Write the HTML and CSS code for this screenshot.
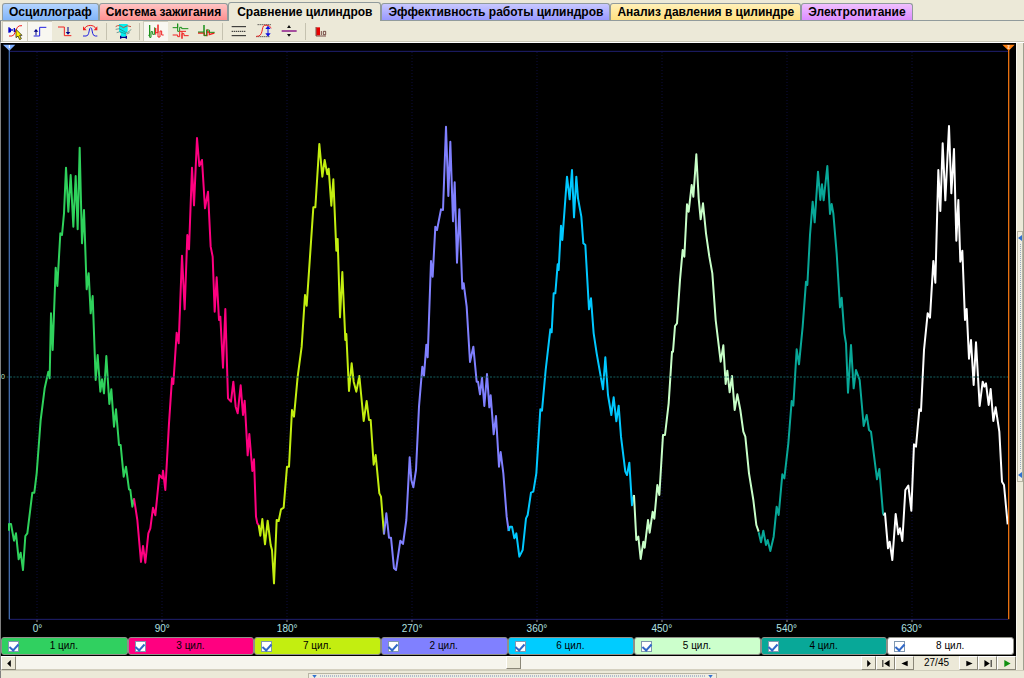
FILE: index.html
```html
<!DOCTYPE html>
<html lang="ru">
<head>
<meta charset="utf-8">
<title>Сравнение цилиндров</title>
<link rel="stylesheet" href="styles.css">
</head>
<body>
<div class="tabs" role="tablist">
  <button class="tab tab-blue" role="tab">Осциллограф</button>
  <button class="tab tab-red" role="tab">Система зажигания</button>
  <button class="tab tab-active" role="tab" aria-selected="true">Сравнение цилиндров</button>
  <button class="tab tab-violet" role="tab">Эффективность работы цилиндров</button>
  <button class="tab tab-yellow" role="tab">Анализ давления в цилиндре</button>
  <button class="tab tab-pink" role="tab">Электропитание</button>
</div>
<div class="toolbar" role="toolbar">
  <button class="tool pressed" aria-label="Выбор"><svg class="icon" viewBox="12 66 60 54"><path d="M24 82v16M28 85v12M33 87v6M40 84v12" stroke="#00c" stroke-width="4"/><path d="M24 108q10 2 15-4l10-22q4-6 14-5" stroke="#f02020" stroke-width="3"/><path d="M45 88v25l6-5 5 11 5-3-5-10h7z" fill="#fff000" stroke="#000" stroke-width="2"/></svg></button>
  <button class="tool pressed" aria-label="Фронт"><svg class="icon" viewBox="90 66 60 54"><path d="M101 108h18V82h20" stroke="#2020e0" stroke-width="3"/><path d="M108 106V90" stroke="#008" stroke-width="3"/><path d="M101 95l7-8 7 8z" fill="#008"/></svg></button>
  <button class="tool" aria-label="Спад"><svg class="icon" viewBox="165 66 60 54"><path d="M174 81h19v26h21" stroke="#f02020" stroke-width="3"/><path d="M204 81v17" stroke="#008" stroke-width="3"/><path d="M197 96l7 8 7-8z" fill="#008"/></svg></button>
  <button class="tool" aria-label="Цикл"><svg class="icon" viewBox="240 66 60 54"><path d="M249 108h9q6 0 8-8l3-14q3-6 6 0l3 14q2 8 8 8h6" stroke="#2020e0" stroke-width="3"/><path d="M254 86c5-13 28-13 34 0" stroke="#f02020" stroke-width="3"/><path d="M249 79v12h11zM292 79v12h-11z" fill="#f02020"/></svg></button>
  <span class="sep"></span>
  <button class="tool" aria-label="Датчик"><svg class="icon" viewBox="337 66 60 54"><path d="M355 72h26v22l-5 5v11h-16V99l-5-5z" fill="#00f0f0"/><path d="M345 88q10-6 23 5t23-5M348 98q9-6 20 1t19-1" stroke="#307070" stroke-width="2"/><path d="M345 80q10-8 23 3q12-10 23-3" stroke="#c05040" stroke-width="3"/><path d="M360 107v9M377 107v9M360 112h17" stroke="#008" stroke-width="4"/></svg></button>
  <span class="sep"></span>
  <button class="tool pressed" aria-label="Рядом"><svg class="icon" viewBox="435 66 60 54"><path d="M442 106h4V75v37h4V95h5v8h6V82" stroke="#189018" stroke-width="3"/><path d="M464 104V84v14h7V74v37h6V93h5v12h6" stroke="#f02020" stroke-width="3"/></svg></button>
  <button class="tool" aria-label="Друг под другом"><svg class="icon" viewBox="510 66 60 54"><path d="M515 83h15V71v23h6V82h6v4h20" stroke="#189018" stroke-width="3"/><path d="M515 105h15v5h6V94h7v22-15h6v6h14M543 94h12" stroke="#f02020" stroke-width="3"/></svg></button>
  <button class="tool" aria-label="Наложение"><svg class="icon" viewBox="585 66 60 54"><path d="M591 99h19v7h8V88v21-13h7v8l15-5" stroke="#f02020" stroke-width="4"/><path d="M591 96h18V75v32h8V90h8v7h16" stroke="#189018" stroke-width="3"/></svg></button>
  <span class="sep"></span>
  <button class="tool" aria-label="Линии"><svg class="icon" viewBox="684 66 60 54"><path d="M692 80h43M692 107h43" stroke="#222" stroke-width="3"/><path d="M692 94h43" stroke="#222" stroke-width="3" stroke-dasharray="4 2"/></svg></button>
  <button class="tool" aria-label="Размах"><svg class="icon" viewBox="759 66 60 54"><path d="M770 74h42M766 110h42" stroke="#222" stroke-width="3" stroke-dasharray="3 3"/><path d="M766 109c23 2 14-32 25-33s12 0 20 8" stroke="#f02020" stroke-width="3"/><path d="M801 82v23" stroke="#1010e0" stroke-width="3"/><path d="M793 87l8-10 8 10zM793 100l8 10 8-10z" fill="#1010e0"/></svg></button>
  <button class="tool" aria-label="Сжать"><svg class="icon" viewBox="835 66 60 54"><path d="M843 93h45" stroke="#800080" stroke-width="4"/><path d="M859 84l6-9 6 9zM859 102l6 8 6-8z" fill="#111"/></svg></button>
  <span class="sep"></span>
  <button class="tool" aria-label="Десять"><svg class="icon" viewBox="933 66 60 54"><path d="M946 82h11v24h-11z" fill="#e80000"/><path d="M945 81v27h30M961 93v12M967 94h7v10h-7z" stroke="#400000" stroke-width="2"/></svg></button>
</div>
<main class="work">
  <section class="scope">
    <svg class="plot" viewBox="3 129 3045 1737" preserveAspectRatio="none" role="img" aria-label="Сигналы цилиндров">
      <path class="grid" d="M111 156V1856M486 156V1856M861 156V1856M1236 156V1856M1611 156V1856M1986 156V1856M2361 156V1856M2736 156V1856"/>
      <path class="tick" d="M111 1858v8M486 1858v8M861 1858v8M1236 1858v8M1611 1858v8M1986 1858v8M2361 1858v8M2736 1858v8"/>
      <path class="frame" d="M28 154H3024M28 1858H3024"/>
      <path class="cursor-a" d="M28 147V1858"/>
      <path d="M9 134h37l-18 18z" fill="#80b0ff"/><path d="M28 135v9" stroke="#fff" stroke-width="3"/>
      <g transform="translate(0 360)">
        <polyline class="wave" stroke="#2fd25c" points="27,1232 27,1212 33,1212 42,1262 48,1240 56,1318 62,1298 69,1350 76,1248 82,1240 97,1118 103,1118 110,1060 122,900 134,805 145,755 149,775 153,580 158,690 167,443 172,498 181,340 186,345 192,280 198,143 205,275 212,165 220,320 227,168 233,328 239,83 246,370 252,270 260,508 266,460 272,580 278,528 287,780 293,705 301,815 306,778 312,820 319,708 328,852 334,808 342,920 348,868 357,975 362,975 371,1070 378,1040 387,1108 391,1110 397,1160 402,1135"/>
        <polyline class="wave" stroke="#ff0080" points="402,1135 412,1200 423,1326 429,1278 436,1328 445,1240 451,1225 459,1163 466,1186 478,1065 487,1075 489,1052 496,1110 507,910 516,775 520,792 530,638 536,670 546,407 554,568 562,345 567,388 576,143 582,256 591,54 598,138 606,120 615,265 624,215 632,380 638,410 644,575 650,472 657,600 661,590 669,743 676,567 684,835 693,845 700,785 707,860 713,880 722,796 729,885 734,842 743,1006 748,942 757,1053 762,1018 768,1190 772,1210 776,1215"/>
      </g>
      <g transform="translate(750 360)">
        <polyline class="wave" stroke="#c3ee10" points="26,1215 31,1247 37,1197 45,1273 53,1202 62,1275 66,1290 72,1390 80,1200 86,1203 93,1168 101,1163 111,1040 117,1040 126,870 132,890 143,770 155,680 165,525 170,557 180,410 190,262 196,262 208,72 217,170 224,120 232,163 236,146 244,257 250,178 259,392 263,357 270,592 277,456 286,660 289,642 297,813 305,730 311,785 319,815 328,768 341,903 350,843 357,900 362,900 371,1034 377,1005 388,1120 393,1130 402,1243"/>
        <polyline class="wave" stroke="#8080ff" points="402,1243 409,1180 417,1253 423,1253 432,1345 438,1350 451,1262 459,1272 469,1200 479,1012 484,1080 490,1102 498,1050 507,860 517,740 522,767 529,674 533,712 543,423 548,470 556,320 561,330 573,268 579,270 588,20 595,228 601,65 609,304 614,187 621,428 628,268 637,506 641,490 650,560 660,726 670,680 680,785 684,785 690,823 696,773 703,858 711,762 718,862 722,826 731,943 738,888 747,1040 752,996 760,1060 770,1190 776,1233"/>
      </g>
      <g transform="translate(1500 360)">
        <polyline class="wave" stroke="#00c8ff" points="26,1233 30,1220 36,1220 43,1255 49,1240 58,1310 68,1290 78,1195 83,1185 93,1118 100,1115 109,1060 121,868 126,872 137,750 151,628 155,637 161,520 166,520 173,433 176,450 183,317 187,360 201,170 209,238 216,150 222,292 229,170 234,235 244,290 250,370 256,375 267,568 273,535 281,640 290,700 309,808 316,712 324,825 334,885 341,832 349,904 356,857 363,950 376,1055 381,1065 388,1028 396,1156 402,1125"/>
        <polyline class="wave" stroke="#c8ffc8" points="402,1125 409,1260 415,1250 422,1317 430,1265 434,1283 444,1200 449,1238 458,1175 463,1196 472,1095 478,1125 489,945 495,945 506,850 516,695 519,695 525,618 531,610 540,480 548,390 553,410 561,253 566,275 575,195 580,230 589,103 596,235 602,298 609,250 618,340 628,410 637,460 647,600 662,725 670,676 677,792 682,752 689,817 696,768 704,870 712,823 721,870 730,935 736,950 747,1060 760,1140 769,1215 776,1235"/>
      </g>
      <g transform="translate(2250 360)">
        <polyline class="wave" stroke="#08a898" points="26,1237 33,1267 40,1232 48,1275 53,1260 61,1293 71,1250 80,1160 86,1185 97,1063 103,1075 115,970 125,843 130,857 140,688 147,733 158,620 168,485 172,495 180,345 188,245 194,307 204,155 211,240 216,193 221,241 232,138 240,282 245,252 250,280 260,400 270,562 275,533 283,640 288,670 294,818 303,675 311,805 318,750 329,780 341,918 350,885 357,930 363,935 381,1078 388,1047 399,1180 402,1187"/>
        <polyline class="wave" stroke="#ffffff" points="402,1187 405,1180 414,1285 419,1265 427,1320 437,1182 445,1243 450,1225 457,1263 466,1110 475,1097 484,1172 492,973 498,980 508,868 513,873 522,690 533,580 540,593 550,423 556,488 565,150 571,273 578,70 586,241 597,18 604,220 612,87 619,362 625,240 631,425 637,392 645,600 650,567 657,716 663,660 671,795 678,667 689,858 698,785 703,800 708,790 716,855 722,807 730,903 737,862 748,935 756,1085 762,1095 773,1213"/>
      </g>
      <path class="zero" d="M20 1131H3024"/>
      <text class="zero-label" x="3" y="1138">0</text>
      <path class="cursor-b" d="M3026 147V1858"/>
      <path d="M3007 134h37l-18 18z" fill="#ff8010"/><path d="M3022 137h6l-5 8h6" stroke="#fff" stroke-width="2" fill="none"/>
    </svg>
    <div class="axis"><span>0°</span><span>90°</span><span>180°</span><span>270°</span><span>360°</span><span>450°</span><span>540°</span><span>630°</span></div>
    <div class="legend">
      <label class="cyl c1"><input type="checkbox" checked><span>1 цил.</span></label>
      <label class="cyl c3"><input type="checkbox" checked><span>3 цил.</span></label>
      <label class="cyl c7"><input type="checkbox" checked><span>7 цил.</span></label>
      <label class="cyl c2"><input type="checkbox" checked><span>2 цил.</span></label>
      <label class="cyl c6"><input type="checkbox" checked><span>6 цил.</span></label>
      <label class="cyl c5"><input type="checkbox" checked><span>5 цил.</span></label>
      <label class="cyl c4"><input type="checkbox" checked><span>4 цил.</span></label>
      <label class="cyl c8"><input type="checkbox" checked><span>8 цил.</span></label>
    </div>
    <div class="pager">
      <button class="step" aria-label="Влево"><svg viewBox="0 0 10 10"><path d="M7 1v8L3 5z"/></svg></button>
      <input class="scroll" type="range" min="1" max="45" value="27" aria-label="Кадр">
      <button class="step" aria-label="Вправо"><svg viewBox="0 0 10 10"><path d="M3 1v8l4-4z"/></svg></button>
      <button class="nav" aria-label="Первый"><svg viewBox="0 0 10 10"><path d="M1 1h1v8H1zM9 1v8L3 5z"/></svg></button>
      <button class="nav" aria-label="Предыдущий"><svg viewBox="0 0 10 10"><path d="M8 2v6L1 5z"/></svg></button>
      <output class="count">27/45</output>
      <button class="nav" aria-label="Следующий"><svg viewBox="0 0 10 10"><path d="M2 2v6l7-3z"/></svg></button>
      <button class="nav" aria-label="Последний"><svg viewBox="0 0 10 10"><path d="M8 1h1v8H8zM1 1v8l6-4z"/></svg></button>
      <button class="nav play" aria-label="Пуск"><svg viewBox="0 0 10 10"><path d="M2 1v8l7-4z"/></svg></button>
    </div>
  </section>
  <aside class="side">
    <button class="grip grip-v" aria-label="Боковая панель"><svg viewBox="0 0 4 6"><path d="M4 0v6L0 3z"/></svg><i class="dots"></i><svg viewBox="0 0 4 6"><path d="M4 0v6L0 3z"/></svg></button>
  </aside>
</main>
<footer class="foot">
  <button class="grip grip-h" aria-label="Нижняя панель"><svg viewBox="0 0 6 4"><path d="M0 0h6L3 4z"/></svg><i class="dots"></i><svg viewBox="0 0 6 4"><path d="M0 0h6L3 4z"/></svg></button>
</footer>
</body>
</html>
```
FILE: styles.css
```css
* { box-sizing: border-box; }
body {
  margin: 0;
  height: 100vh;
  display: flex;
  flex-direction: column;
  overflow: hidden;
  background: #ece9d8;
  color: #000;
  font: 10px/12px "Liberation Sans", Arial, sans-serif;
}
button { font: inherit; color: inherit; margin: 0; padding: 0; border: 0; background: none; }

.tabs {
  display: flex;
  align-items: flex-end;
  height: 21px;
  padding-left: 2px;
  border-bottom: 1px solid #919b9c;
}
.tab {
  height: 17px;
  padding: 0 6px;
  border: 1px solid #919b9c;
  border-bottom: 0;
  border-radius: 3px 3px 0 0;
  font-size: 12px;
  line-height: 16px;
  font-weight: bold;
  white-space: nowrap;
}
.tab-blue { background: linear-gradient(#b4d4ff, #80b4f8); }
.tab-red { background: linear-gradient(#ffc4c4, #ff9090); }
.tab-active { height: 19px; margin-bottom: -1px; padding: 0 8px; background: #ece9d8; }
.tab-violet { background: linear-gradient(#c8c8ff, #9898ff); }
.tab-yellow { background: linear-gradient(#fff0b8, #ffe080); }
.tab-pink { background: linear-gradient(#f0c0ff, #dc8cff); }

.toolbar {
  display: flex;
  height: 22px;
  padding: 0 1px;
  border-bottom: 1px solid #fff;
  border-left: 1px solid #808080;
  box-shadow: inset 0 -1px #c8c5b4;
}
.tool { width: 25px; height: 20px; display: flex; align-items: center; justify-content: center; }
.pressed { background: #f8f7f1; box-shadow: inset 1px 1px #d0cdbc; }
.icon { width: 20px; height: 18px; fill: none; }
.sep { width: 8px; display: flex; }
.sep::before { content: ""; width: 1px; margin: 2px 0 2px 4px; background: #c5c2b0; }

.work { flex: 1; min-height: 0; display: flex; }
.scope { flex: 1; min-width: 0; display: flex; flex-direction: column; background: #000; border-left: 1px solid #808080; overflow: hidden; }
.plot { flex: 1; min-height: 0; width: 100%; display: block; }
.wave { fill: none; stroke-width: 6; stroke-linejoin: round; }
.grid { stroke: #0c0c3c; stroke-width: 3; stroke-dasharray: 3 6; }
.tick { stroke: #909090; stroke-width: 3; }
.frame { fill: none; stroke: #202070; stroke-width: 3; }
.zero { stroke: #146060; stroke-width: 3; stroke-dasharray: 6 4; }
.zero-label { fill: #c0e8c0; font-size: 21px; }
.cursor-a { stroke: #4068a8; stroke-width: 4; }
.cursor-b { stroke: #e87010; stroke-width: 4; }
.axis {
  display: grid;
  grid-template-columns: repeat(8, 1fr);
  height: 15px;
  margin: 0 42px 0 -26px;
  padding-top: 1px;
  color: #b0e0e0;
  text-align: center;
}

.legend { display: grid; grid-template-columns: repeat(8, 1fr); height: 19px; padding: 0 2px 1px 0; }
.cyl {
  display: flex;
  align-items: center;
  padding: 0 6px;
  border: 1px solid #909088;
  border-radius: 3px;
}
.cyl span { flex: 1; text-align: center; padding-right: 12px; }
.cyl input {
  appearance: none;
  width: 11px;
  height: 11px;
  margin: 0;
  border: 1px solid #8098b0;
  background: #fff;
  display: flex;
  justify-content: center;
  align-items: flex-start;
}
.cyl input:checked::before {
  content: "";
  width: 4px;
  height: 7px;
  border: solid #3068c8;
  border-width: 0 2px 2px 0;
  transform: rotate(42deg);
}
.c1 { background: #30d060; }
.c3 { background: #ff0080; }
.c7 { background: #c3ee10; }
.c2 { background: #8080ff; }
.c6 { background: #00ccff; }
.c5 { background: #ccffcc; }
.c4 { background: #08a898; }
.c8 { background: #fff; }

.pager { display: flex; height: 14px; background: #ece9d8; }
.pager button {
  display: flex;
  align-items: center;
  justify-content: center;
  background: #ece9d8;
  border: 1px solid;
  border-color: #fff #8a8778 #8a8778 #fff;
}
.pager svg { width: 10px; height: 9px; }
.pager .step { width: 15px; }
.pager .nav { width: 19px; }
.pager .play { fill: #109010; }
.count { width: 45px; text-align: center; line-height: 14px; }
.scroll { appearance: none; flex: 1; min-width: 0; height: 14px; margin: 0; background: #f6f5ee; border-bottom: 1px solid #d4d0c0; }
.scroll::-webkit-slider-thumb {
  appearance: none;
  width: 15px;
  height: 13px;
  background: #ece9d8;
  border: 1px solid;
  border-color: #fff #8a8778 #8a8778 #fff;
}

.side { width: 8px; display: flex; align-items: center; border-left: 1px solid #f8f7f0; border-right: 1px solid #a0a090; }
.grip { display: flex; align-items: center; justify-content: space-between; border: 1px solid #b8b5a4; background: #f0eee2; fill: #3070d0; }
.grip-v { width: 6px; height: 40%; padding: 3px 0; flex-direction: column; }
.grip-v svg { width: 4px; height: 6px; }
.grip-v .dots { flex: 1; width: 1px; margin: 3px 0; background: repeating-linear-gradient(#98a8c0 0 1px, transparent 1px 2px); }
.foot { height: 8px; display: flex; justify-content: center; align-items: flex-end; border-left: 1px solid #808080; border-top: 1px solid #d0cdbc; }
.grip-h { width: 40%; height: 5px; padding: 0 3px; border-bottom: 0; }
.grip-h svg { width: 5px; height: 3px; }
.grip-h .dots { flex: 1; height: 2px; margin: 0 3px; background: repeating-linear-gradient(90deg, #b0bccc 0 1px, transparent 1px 2px); }
```
